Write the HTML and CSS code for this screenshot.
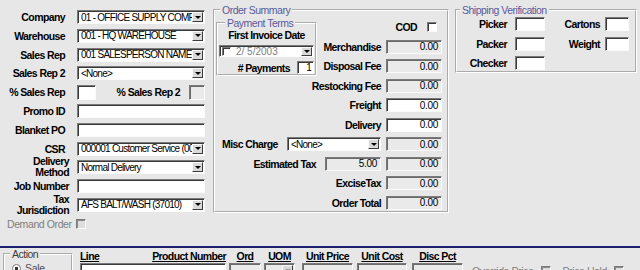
FILE: index.html
```html
<!DOCTYPE html>
<html>
<head>
<meta charset="utf-8">
<link rel="stylesheet" href="styles.css">
</head>
<body>
<div class="screen">
  <div class="top">
    <div class="left">
      <span class="lbl up">Company</span>
      <div class="field combo"><span class="val">01 - OFFICE SUPPLY COMPA</span><span class="dd"></span></div>
      <span class="lbl up">Warehouse</span>
      <div class="field combo"><span class="val">001 - HQ WAREHOUSE</span><span class="dd"></span></div>
      <span class="lbl up">Sales Rep</span>
      <div class="field combo"><span class="val">001 SALESPERSON NAME (</span><span class="dd"></span></div>
      <span class="lbl up">Sales Rep 2</span>
      <div class="field combo"><span class="val">&lt;None&gt;</span><span class="dd"></span></div>
      <span class="lbl up">% Sales Rep</span>
      <div class="pct-row"><div class="field pct"></div><span class="lbl">% Sales Rep 2</span><div class="field pct2 disabled"></div></div>
      <span class="lbl up">Promo ID</span>
      <div class="field"></div>
      <span class="lbl up">Blanket PO</span>
      <div class="field"></div>
      <span class="lbl up">CSR</span>
      <div class="field combo"><span class="val">000001 Customer Service (00</span><span class="dd"></span></div>
      <span class="lbl two">Delivery<br>Method</span>
      <div class="field combo"><span class="val">Normal Delivery</span><span class="dd"></span></div>
      <span class="lbl">Job Number</span>
      <div class="field"></div>
      <span class="lbl two">Tax<br>Jurisdiction</span>
      <div class="field combo"><span class="val">AFS BALT/WASH (37010)</span><span class="dd"></span></div>
      <div class="demand"><span class="dim">Demand Order</span><span class="chk disabled"></span></div>
    </div>

    <fieldset class="group summary">
      <legend>Order Summary</legend>
      <div class="sum-grid">
        <fieldset class="group terms">
          <legend>Payment Terms</legend>
          <div class="terms-title">First Invoice Date</div>
          <div class="field date"><span class="chk mini"></span><span class="val dim">2/ 5/2003</span><span class="dd"></span></div>
          <div class="pay-row"><span class="lbl">#&nbsp;Payments</span><div class="field num">1</div></div>
        </fieldset>
        <div class="cod"><span class="lbl">COD</span><span class="chk"></span></div>
        <span class="lbl b">Merchandise</span><div class="field amt disabled">0.00</div>
        <span class="lbl b">Disposal Fee</span><div class="field amt disabled">0.00</div>
        <span class="lbl ab">Restocking Fee</span><div class="field amt disabled">0.00</div>
        <span class="lbl ab">Freight</span><div class="field amt">0.00</div>
        <span class="lbl ab">Delivery</span><div class="field amt">0.00</div>
        <div class="misc"><span class="lbl">Misc Charge</span><div class="field combo misc-combo"><span class="val">&lt;None&gt;</span><span class="dd"></span></div></div>
        <div class="field amt disabled">0.00</div>
        <div class="est"><span class="lbl">Estimated Tax</span><div class="field amt est-box disabled">5.00</div></div>
        <div class="field amt disabled">0.00</div>
        <span class="lbl ab">ExciseTax</span><div class="field amt disabled">0.00</div>
        <span class="lbl ab">Order Total</span><div class="field amt disabled">0.00</div>
      </div>
    </fieldset>

    <fieldset class="group ship">
      <legend>Shipping Verification</legend>
      <div class="ship-grid">
        <span class="lbl l1">Picker</span><div class="field"></div>
        <span class="lbl l2">Cartons</span><div class="field"></div>
        <span class="lbl l1">Packer</span><div class="field"></div>
        <span class="lbl l2">Weight</span><div class="field"></div>
        <span class="lbl l1">Checker</span><div class="field"></div>
      </div>
    </fieldset>
  </div>

  <div class="bottom">
    <fieldset class="group action">
      <legend>Action</legend>
      <div class="radio-row"><span class="radio"></span><span>Sale</span></div>
    </fieldset>
    <div class="lines">
      <div class="hdr split"><span>Line</span><span>Product Number</span></div>
      <div class="hdr"><span>Ord</span></div>
      <div class="hdr"><span>UOM</span></div>
      <div class="hdr"><span>Unit Price</span></div>
      <div class="hdr"><span>Unit Cost</span></div>
      <div class="hdr"><span>Disc Pct</span></div>
      <div></div>
      <div class="field w-line"></div>
      <div class="field w-ord disabled"></div>
      <div class="field combo w-uom disabled"><span class="val"></span><span class="dd off"></span></div>
      <div class="field w-price disabled"></div>
      <div class="field w-cost disabled"></div>
      <div class="field w-disc disabled"></div>
      <div class="flags"><span class="dim">Override Price</span><span class="chk disabled"></span><span class="dim ph">Price Hold</span><span class="chk disabled"></span></div>
    </div>
  </div>
</div>
</body>
</html>
```
FILE: styles.css
```css
* { box-sizing: border-box; }

body {
  margin: 0;
  background: #e7e7e7;
  font-family: "Liberation Sans", Arial, sans-serif;
  font-size: 10.5px;
  color: #000;
}

.screen {
  width: 640px;
  height: 270px;
  overflow: hidden;
}

.top {
  display: flex;
  height: 246px;
}

/* ---------- left column ---------- */
.left {
  width: 212px;
  flex: none;
  display: grid;
  grid-template-columns: 69px 128px;
  column-gap: 8px;
  grid-auto-rows: 14px;
  row-gap: 4.8px;
  padding-top: 10px;
  align-items: center;
  align-content: start;
}

.lbl {
  font-weight: bold;
  font-size: 10.5px;
  letter-spacing: -0.6px;
  white-space: nowrap;
  text-align: right;
  line-height: 10px;
}
.lbl.up { padding-right: 4px; }
.lbl.two { line-height: 11px; }

.dim { color: #7e7e7e; font-weight: normal; letter-spacing: -0.4px; }

.field {
  height: 14px;
  background: #fff;
  border: 1px solid;
  border-color: #7a7a7a #fbfbfb #fbfbfb #7a7a7a;
  box-shadow: inset 1px 1px 0 #3a3a3a;
  display: flex;
  align-items: center;
  font-size: 10px;
  letter-spacing: -0.75px;
  white-space: nowrap;
  overflow: hidden;
}
.field.disabled { background: #eaeaea; box-shadow: inset 1px 1px 0 #6a6a6a; }
.field .val {
  flex: 1;
  min-width: 0;
  overflow: hidden;
  padding-left: 3px;
}

.dd {
  flex: none;
  width: 11px;
  height: 10px;
  margin-right: 1px;
  background: #d9d9d9;
  border: 1px solid;
  border-color: #fafafa #3c3c3c #3c3c3c #fafafa;
  display: flex;
  align-items: center;
  justify-content: center;
}
.dd::after {
  content: "";
  border-left: 3px solid transparent;
  border-right: 3px solid transparent;
  border-top: 3px solid #000;
}
.dd.off::after { border-top-color: #9a9a9a; }

.chk {
  display: inline-block;
  flex: none;
  width: 10px;
  height: 10px;
  background: #fff;
  border: 1px solid;
  border-color: #7a7a7a #fbfbfb #fbfbfb #7a7a7a;
  box-shadow: inset 1px 1px 0 #3a3a3a;
}
.chk.disabled { background: #dedede; box-shadow: inset 1px 1px 0 #8a8a8a; }

.pct-row {
  display: flex;
  align-items: center;
  height: 15px;
}
.pct-row .field { height: 15px; }
.pct { width: 19px; }
.pct-row .lbl { margin-left: auto; margin-right: 9px; }
.pct2 { width: 16px; }

.demand {
  grid-column: 1 / 3;
  display: flex;
  align-items: center;
  gap: 4px;
  padding-left: 7px;
}

/* ---------- group boxes ---------- */
.group {
  margin: 0;
  padding: 0;
  border: 2px groove #fff;
  min-width: 0;
}
.group > legend {
  padding: 0 2px;
  line-height: 14px;
  color: #5a5a9c;
  letter-spacing: -0.5px;
  white-space: nowrap;
}

.summary {
  margin-left: 1px;
  margin-top: 3px;
  width: 236px;
  height: 210px;
  padding: 0 5px 0 1px;
  flex: none;
}
.summary > legend { margin-left: 4px; }

.sum-grid {
  display: grid;
  grid-template-columns: 101px 1fr 56px;
  column-gap: 5px;
  grid-auto-rows: 14px;
  row-gap: 5.5px;
  padding-top: 3px;
  align-items: center;
}
.sum-grid .lbl { justify-self: end; }
.sum-grid .lbl.b { grid-column: 2; }
.sum-grid .lbl.ab { grid-column: 1 / 3; }
.sum-grid > .field.amt { grid-column: 3; }

.terms {
  grid-column: 1;
  grid-row: 1 / 4;
  align-self: stretch;
  margin: -4px 0 -3px 0;
  padding: 0 1px;
}
.terms > legend { margin-left: 6px; }
.terms-title {
  font-weight: bold;
  letter-spacing: -0.6px;
  text-align: center;
  line-height: 10px;
  white-space: nowrap;
}
.date {
  margin-top: 5px;
  height: 12px;
  padding-left: 2px;
}
.chk.mini { width: 9px; height: 9px; }
.date .val { padding-left: 5px; letter-spacing: 0; font-size: 10px; }
.date .dd { height: 9px; }
.pay-row {
  margin-top: 4px;
  display: flex;
  justify-content: flex-end;
  align-items: center;
  gap: 7px;
}
.num {
  width: 17px;
  height: 13px;
  justify-content: flex-end;
  padding-right: 2px;
}

.cod {
  grid-column: 2 / 4;
  justify-self: end;
  display: flex;
  align-items: center;
  gap: 10px;
  padding-right: 5px;
}

.amt {
  justify-content: flex-end;
  padding-right: 3px;
  letter-spacing: -0.3px;
}

.misc {
  grid-column: 1 / 3;
  display: flex;
  align-items: center;
  justify-content: space-between;
  padding-left: 6px;
}
.misc-combo { width: 94px; }

.est {
  grid-column: 1 / 3;
  display: flex;
  align-items: center;
  justify-content: flex-end;
  gap: 9px;
}
.est-box { width: 56px; }

.ship {
  margin-left: 6px;
  margin-top: 3px;
  width: 182px;
  height: 70px;
  flex: none;
  padding: 0 6px 0 0;
}
.ship > legend { margin-left: 3px; }
.ship-grid {
  display: grid;
  grid-template-columns: 58px 30px 60px 24px;
  grid-auto-rows: 14px;
  row-gap: 5.5px;
  align-items: center;
}
.ship-grid .l1 { padding-right: 8px; }
.ship-grid .l2 { padding-right: 5px; }

/* ---------- bottom strip ---------- */
.bottom {
  display: flex;
  border-top: 2px solid #1f1f70;
  height: 24px;
}

.action {
  margin-left: 3px;
  width: 70px;
  height: 34px;
  flex: none;
}
.action > legend {
  margin-left: 5px;
  line-height: 12px;
  color: #3c3c3c;
}
.radio-row {
  display: flex;
  align-items: center;
  gap: 4px;
  padding: 2px 0 0 7px;
  color: #505050;
  letter-spacing: -0.3px;
}
.radio {
  width: 9px;
  height: 9px;
  border-radius: 50%;
  border: 1px solid #7a7a7a;
  background: radial-gradient(circle, #333 0 1.5px, #fff 2px);
}

.lines {
  display: grid;
  grid-template-columns: 149px 35px 38px 55px 55px 51px auto;
  grid-template-rows: 15px 14px;
  margin-left: 7px;
}
.hdr {
  align-self: end;
  font-weight: bold;
  letter-spacing: -0.6px;
  line-height: 12px;
  text-align: center;
  white-space: nowrap;
  padding-bottom: 1px;
}
.hdr span { text-decoration: underline; }
.hdr.split {
  display: flex;
  justify-content: space-between;
  width: 146px;
}
.w-line { width: 146px; }
.w-ord { width: 32px; }
.w-uom { width: 31px; }
.w-price { width: 51px; }
.w-cost { width: 50px; }
.w-disc { width: 51px; }
.lines .hdr:nth-child(2) { width: 32px; }
.lines .hdr:nth-child(3) { width: 31px; }
.lines .hdr:nth-child(4) { width: 51px; }
.lines .hdr:nth-child(5) { width: 50px; }
.lines .hdr:nth-child(6) { width: 51px; }

.flags {
  display: flex;
  align-items: center;
  margin-left: 9px;
  margin-top: 1px;
  gap: 7px;
  white-space: nowrap;
}
.flags .ph { margin-left: 3px; }
.flags .chk { margin-right: 2px; }
```
